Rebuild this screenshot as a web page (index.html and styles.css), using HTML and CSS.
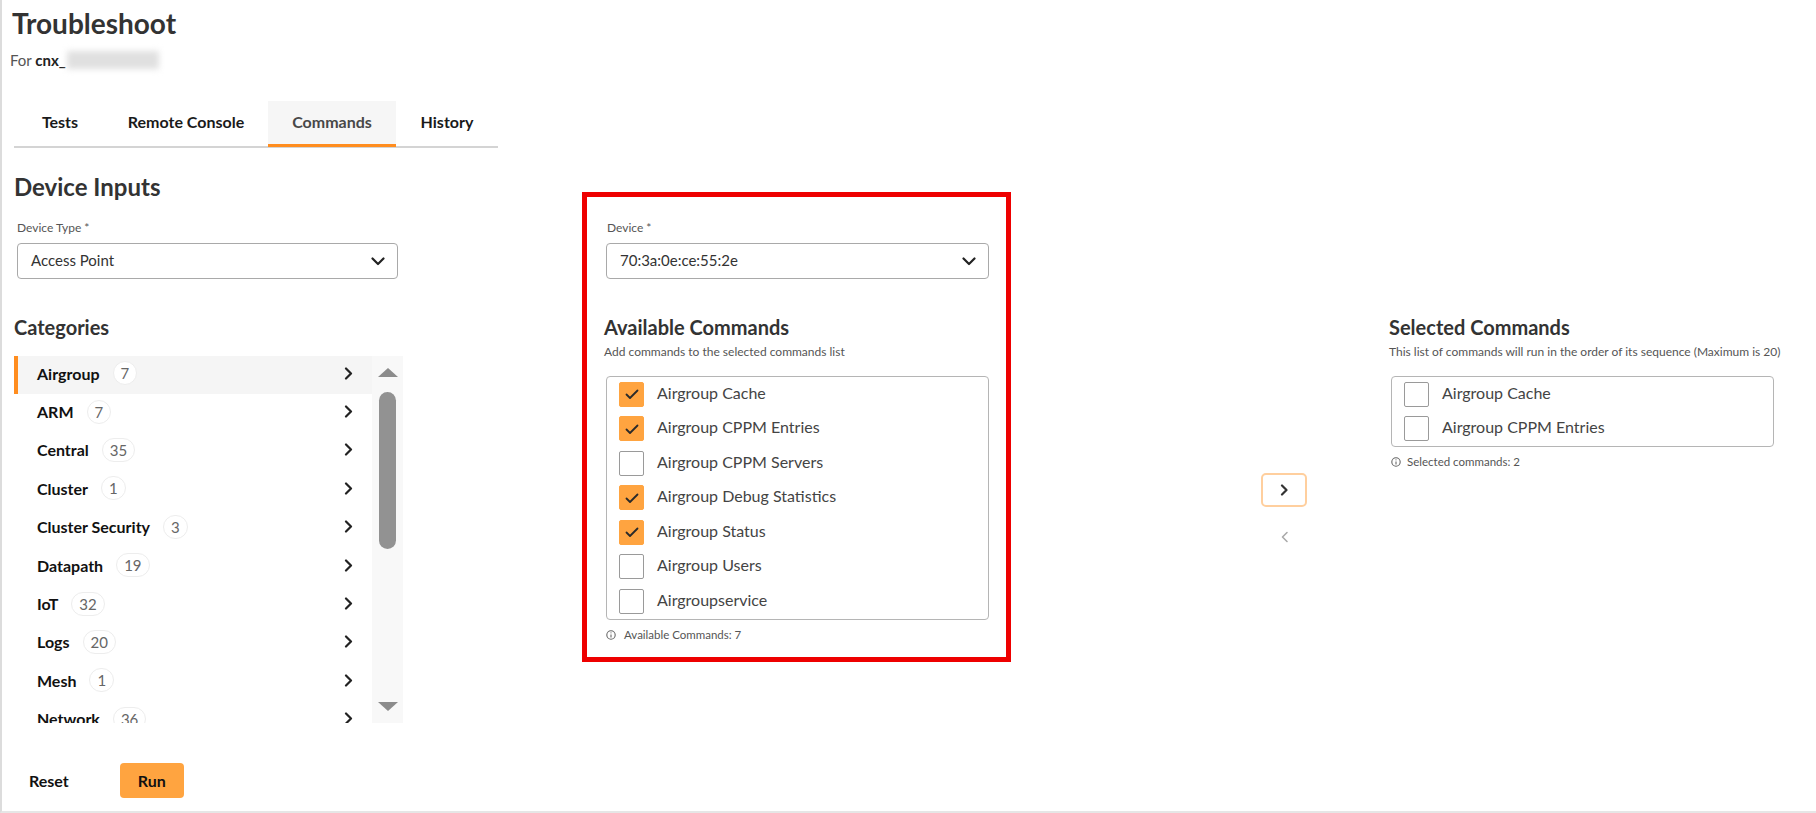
FILE: index.html
```html
<!DOCTYPE html>
<html lang="en">
<head>
<meta charset="utf-8">
<title>Troubleshoot</title>
<link rel="stylesheet" href="styles.css">
</head>
<body>
<div class="page">
  <header class="header">
    <h1 class="title">Troubleshoot</h1>
    <div class="for">For <b>cnx_</b><span class="blur"></span></div>
    <nav class="tabs">
      <div class="tab t-tests">Tests</div>
      <div class="tab t-remote">Remote Console</div>
      <div class="tab t-commands active">Commands</div>
      <div class="tab t-history">History</div>
    </nav>
  </header>

  <main class="work">
    <section class="col-left">
      <h2 class="h-inputs">Device Inputs</h2>
      <label class="lbl">Device Type *</label>
      <div class="select sel-left">
        <span>Access Point</span>
        <svg class="chev-down" width="14" height="9" viewBox="0 0 14 9"><path d="M1.5 1.5 L7 7 L12.5 1.5"/></svg>
      </div>
      <h3 class="h-sec">Categories</h3>
      <div class="cats">
        <div class="cat-list">
          <div class="cat sel"><span class="cat-name">Airgroup</span><span class="badge">7</span><svg class="chev-right" width="9" height="13" viewBox="0 0 9 13"><path d="M2 1.5 L7 6.5 L2 11.5"/></svg></div>
          <div class="cat"><span class="cat-name">ARM</span><span class="badge">7</span><svg class="chev-right" width="9" height="13" viewBox="0 0 9 13"><path d="M2 1.5 L7 6.5 L2 11.5"/></svg></div>
          <div class="cat"><span class="cat-name">Central</span><span class="badge">35</span><svg class="chev-right" width="9" height="13" viewBox="0 0 9 13"><path d="M2 1.5 L7 6.5 L2 11.5"/></svg></div>
          <div class="cat"><span class="cat-name">Cluster</span><span class="badge">1</span><svg class="chev-right" width="9" height="13" viewBox="0 0 9 13"><path d="M2 1.5 L7 6.5 L2 11.5"/></svg></div>
          <div class="cat"><span class="cat-name">Cluster Security</span><span class="badge">3</span><svg class="chev-right" width="9" height="13" viewBox="0 0 9 13"><path d="M2 1.5 L7 6.5 L2 11.5"/></svg></div>
          <div class="cat"><span class="cat-name">Datapath</span><span class="badge">19</span><svg class="chev-right" width="9" height="13" viewBox="0 0 9 13"><path d="M2 1.5 L7 6.5 L2 11.5"/></svg></div>
          <div class="cat"><span class="cat-name">IoT</span><span class="badge">32</span><svg class="chev-right" width="9" height="13" viewBox="0 0 9 13"><path d="M2 1.5 L7 6.5 L2 11.5"/></svg></div>
          <div class="cat"><span class="cat-name">Logs</span><span class="badge">20</span><svg class="chev-right" width="9" height="13" viewBox="0 0 9 13"><path d="M2 1.5 L7 6.5 L2 11.5"/></svg></div>
          <div class="cat"><span class="cat-name">Mesh</span><span class="badge">1</span><svg class="chev-right" width="9" height="13" viewBox="0 0 9 13"><path d="M2 1.5 L7 6.5 L2 11.5"/></svg></div>
          <div class="cat"><span class="cat-name">Network</span><span class="badge">36</span><svg class="chev-right" width="9" height="13" viewBox="0 0 9 13"><path d="M2 1.5 L7 6.5 L2 11.5"/></svg></div>
        </div>
        <div class="scroll">
          <svg class="tri-up" width="20" height="9" viewBox="0 0 20 9"><polygon points="0,9 10,0 20,9"/></svg>
          <div class="thumb"></div>
          <svg class="tri-down" width="20" height="9" viewBox="0 0 20 9"><polygon points="0,0 20,0 10,9"/></svg>
        </div>
      </div>
      <div class="actions">
        <button class="btn-reset">Reset</button>
        <button class="btn-run">Run</button>
      </div>
    </section>

    <section class="col-mid">
      <label class="lbl lbl-mid">Device *</label>
      <div class="select sel-mid">
        <span>70:3a:0e:ce:55:2e</span>
        <svg class="chev-down" width="14" height="9" viewBox="0 0 14 9"><path d="M1.5 1.5 L7 7 L12.5 1.5"/></svg>
      </div>
      <h3 class="h-sec">Available Commands</h3>
      <p class="sub">Add commands to the selected commands list</p>
      <div class="cmd-box">
        <div class="cmd"><span class="cb on"><svg width="24" height="24" viewBox="0 0 24 24"><path d="M6.5 12.5 L10 16 L17.5 8.5"/></svg></span><span class="cmd-text">Airgroup Cache</span></div>
        <div class="cmd"><span class="cb on"><svg width="24" height="24" viewBox="0 0 24 24"><path d="M6.5 12.5 L10 16 L17.5 8.5"/></svg></span><span class="cmd-text">Airgroup CPPM Entries</span></div>
        <div class="cmd"><span class="cb"></span><span class="cmd-text">Airgroup CPPM Servers</span></div>
        <div class="cmd"><span class="cb on"><svg width="24" height="24" viewBox="0 0 24 24"><path d="M6.5 12.5 L10 16 L17.5 8.5"/></svg></span><span class="cmd-text">Airgroup Debug Statistics</span></div>
        <div class="cmd"><span class="cb on"><svg width="24" height="24" viewBox="0 0 24 24"><path d="M6.5 12.5 L10 16 L17.5 8.5"/></svg></span><span class="cmd-text">Airgroup Status</span></div>
        <div class="cmd"><span class="cb"></span><span class="cmd-text">Airgroup Users</span></div>
        <div class="cmd"><span class="cb"></span><span class="cmd-text">Airgroupservice</span></div>
      </div>
      <div class="note"><svg width="10" height="10" viewBox="0 0 10 10"><circle cx="5" cy="5" r="4.2"/><path d="M5 4.4 V7.6"/><circle class="dot" cx="5" cy="2.8" r="0.6"/></svg>Available Commands: 7</div>
    </section>

    <div class="arrows">
      <button class="btn-arrow"><svg width="9" height="12" viewBox="0 0 9 12"><path d="M2 1.5 L6.5 6 L2 10.5"/></svg></button>
      <button class="btn-arrow ghost"><svg width="9" height="12" viewBox="0 0 9 12"><path d="M7 1.5 L2.5 6 L7 10.5"/></svg></button>
    </div>

    <section class="col-right">
      <h3 class="h-sec h-right">Selected Commands</h3>
      <p class="sub nowrap">This list of commands will run in the order of its sequence (Maximum is 20)</p>
      <div class="cmd-box">
        <div class="cmd"><span class="cb"></span><span class="cmd-text">Airgroup Cache</span></div>
        <div class="cmd"><span class="cb"></span><span class="cmd-text">Airgroup CPPM Entries</span></div>
      </div>
      <div class="note note-right"><svg width="10" height="10" viewBox="0 0 10 10"><circle cx="5" cy="5" r="4.2"/><path d="M5 4.4 V7.6"/><circle class="dot" cx="5" cy="2.8" r="0.6"/></svg>Selected commands: 2</div>
    </section>
  </main>
</div>
</body>
</html>
```

FILE: styles.css
```css
* { box-sizing: border-box; margin: 0; padding: 0; }
html, body { width: 1816px; height: 813px; overflow: hidden; background: #fff; }
body { font-family: Lato, "Open Sans", "Liberation Sans", sans-serif; color: #333; }

.page {
  height: 813px;
  border-left: 2px solid #dcdcdc;
  border-bottom: 2px solid #e6e6e6;
  padding: 7.5px 0 0 12px;
}

.title { font-size: 28px; line-height: 30px; font-weight: 700; color: #333; margin-left: -2px; }
.for { margin-top: 12.5px; font-size: 15px; line-height: 20px; color: #555; margin-left: -4px; }
.for b { color: #222; font-weight: 700; }
.blur {
  display: inline-block; vertical-align: middle;
  width: 92px; height: 18px; margin-left: 1px; margin-top: -4px;
  background: #e0e0e0; filter: blur(3px);
}

.tabs {
  margin-top: 31px; width: 484px; display: flex; padding-left: 2px;
  border-bottom: 2px solid #d4d4d4;
}
.tab {
  flex: none; height: 46px; line-height: 41px; margin-bottom: -1px;
  border-bottom: 3px solid transparent;
  font-size: 16px; font-weight: 700; color: #1a1a1a; text-align: center;
}
.t-tests { width: 88px; }
.t-remote { width: 164px; }
.t-commands { width: 128px; }
.t-history { width: 102px; }
.tab.active { background: #f6f6f6; border-bottom-color: #ff8d1f; color: #484848; }

.work { display: flex; align-items: flex-start; }

.col-left { flex: none; width: 389px; }
.h-inputs { margin-top: 25px; font-size: 24px; line-height: 28px; font-weight: 700; color: #333; }
.lbl { display: block; margin-top: 20px; margin-left: 3px; font-size: 12px; line-height: 14px; color: #555; }
.select {
  margin-top: 8px; height: 36px;
  border: 1px solid #a9a9a9; border-radius: 4px;
  display: flex; align-items: center; justify-content: space-between;
  padding: 0 12px 3px 13px; font-size: 15px; color: #333;
}
.select svg { margin-top: 3px; }
.sel-left { margin-left: 3px; width: 381px; }
.chev-down path { fill: none; stroke: #222; stroke-width: 2.2; stroke-linecap: round; stroke-linejoin: round; }

.h-sec { margin-top: 36px; font-size: 20px; line-height: 24px; font-weight: 700; color: #333; }

.cats { margin-top: 17px; display: flex; height: 367px; }
.cat-list { width: 358px; overflow: hidden; }
.cat {
  height: 38.4px; display: flex; align-items: center;
  padding: 0 19px 4px 23px;
}
.cat.sel { background: #f5f5f5; border-left: 4px solid #ff8d1f; padding-left: 19px; }
.cat-name { font-size: 16px; font-weight: 700; color: #111; }
.badge {
  margin-left: 13px; height: 24px; min-width: 24px; padding: 0 7px;
  border: 1px solid #ededed; border-radius: 12px; background: #fff;
  display: flex; align-items: center; justify-content: center;
  font-size: 15px; color: #666;
}
.chev-right { margin-left: auto; }
.chev-right path { fill: none; stroke: #222; stroke-width: 2.2; stroke-linecap: round; stroke-linejoin: round; }

.scroll {
  width: 31px; background: #f8f8f8;
  display: flex; flex-direction: column; align-items: center;
}
.scroll polygon { fill: #8c8c8c; }
.tri-up { margin-top: 12px; }
.thumb { margin-top: 15px; width: 17px; height: 157px; border-radius: 8.5px; background: #929292; }
.tri-down { margin-top: 153px; }

.actions { margin-top: 40px; display: flex; align-items: center; }
.actions button { border: none; background: none; font-family: inherit; cursor: pointer; }
.btn-reset { margin-left: 15px; font-size: 16px; font-weight: 700; color: #111; }
.btn-run {
  margin-left: 51px; width: 64px; height: 35px; border-radius: 4px;
  background: #ffa440 !important; font-size: 16px; font-weight: 700; color: #111;
}

.col-mid {
  flex: none; width: 429px; margin-left: 179px; margin-top: 44px;
  border: 5px solid #ee0000;
  padding: 24px 17px 15px 17px;
}
.lbl-mid { margin-top: 0; margin-left: 3px; }
.sel-mid { margin-left: 2px; width: 383px; }
.sub { margin-top: 6px; font-size: 12px; line-height: 14px; color: #555; }
.nowrap { white-space: nowrap; }

.cmd-box {
  margin-top: 17px; margin-left: 2px; width: 383px;
  border: 1px solid #b5b5b5; border-radius: 4px;
}
.cmd { height: 34.5px; display: flex; align-items: center; padding-left: 12px; font-size: 16px; color: #444; }
.cmd-text { padding-bottom: 4px; }
.cb {
  flex: none; width: 25px; height: 25px; margin-right: 13px;
  border: 1.5px solid #9a9a9a; border-radius: 2px; background: #fff;
  display: flex; align-items: center; justify-content: center;
}
.cb.on { background: #ffa440; border-color: #ffa440; }
.cb svg { flex: none; }
.cb path { fill: none; stroke: #2a2a2a; stroke-width: 1.8; stroke-linecap: round; stroke-linejoin: round; }

.note {
  margin-top: 8.5px; margin-left: 2px; display: flex; align-items: center;
  font-size: 11.5px; line-height: 14px; color: #555;
}
.note svg { margin-right: 8px; }
.note-right svg { margin-right: 6px; }
.note circle { fill: none; stroke: #666; stroke-width: 1.1; }
.note path { stroke: #666; stroke-width: 1.1; }
.note circle.dot { fill: #666; stroke: none; }

.arrows { flex: none; width: 46px; margin-left: 250px; margin-top: 325px; display: flex; flex-direction: column; }
.btn-arrow {
  width: 46px; height: 34px; border: 2px solid #ffcf9e; border-radius: 5px; background: #fff;
  display: flex; align-items: center; justify-content: center; cursor: pointer;
}
.btn-arrow path { fill: none; stroke: #333; stroke-width: 2.2; stroke-linecap: round; stroke-linejoin: round; }
.btn-arrow.ghost { margin-top: 13px; border-color: transparent; }
.btn-arrow.ghost path { stroke: #aaa; stroke-width: 1.6; }

.col-right { flex: none; width: 385px; margin-left: 82px; padding-top: 167px; }
.h-right { margin-top: 0; }
.col-right .note { margin-top: 8px; }
```
